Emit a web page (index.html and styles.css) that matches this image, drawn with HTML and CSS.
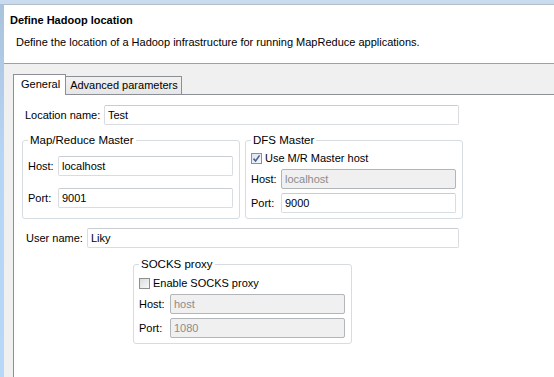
FILE: index.html
```html
<!DOCTYPE html>
<html lang="en">
<head>
  <meta charset="UTF-8" />
  <title>Define Hadoop location</title>
  <link rel="stylesheet" href="styles.css">
</head>
<body>
  <div class="window">
    <div class="frame-edge"></div>
    <div class="dialog">
      <header class="banner">
        <h1>Define Hadoop location</h1>
        <p>Define the location of a Hadoop infrastructure for running MapReduce applications.</p>
      </header>

      <div class="body">
        <div class="tabs">
          <div class="tab active">General</div>
          <div class="tab">Advanced parameters</div>
        </div>

        <div class="tab-page">
          <div class="form">
            <div class="row location-row">
              <label>Location name:</label>
              <input class="field field-location" type="text" value="Test">
            </div>

            <div class="groups">
              <!-- Map/Reduce -->
              <fieldset class="group group-mr">
                <legend>Map/Reduce Master</legend>
                <div class="row mr-host">
                  <label>Host:</label>
                  <input class="field field-group" type="text" value="localhost">
                </div>
                <div class="row mr-port">
                  <label>Port:</label>
                  <input class="field field-group" type="text" value="9001">
                </div>
              </fieldset>

              <!-- DFS -->
              <fieldset class="group group-dfs">
                <legend>DFS Master</legend>
                <div class="check-row">
                  <span class="check checked">
                    <svg width="9" height="9" viewBox="0 0 9 9"><path d="M1.5 4.6 L3.6 7 L7.6 1.4" fill="none" stroke="#4b6496" stroke-width="1.6"/></svg>
                  </span>
                  <span>Use M/R Master host</span>
                </div>
                <div class="row tight">
                  <label>Host:</label>
                  <input class="field field-group disabled" type="text" value="localhost" disabled>
                </div>
                <div class="row tight">
                  <label>Port:</label>
                  <input class="field field-group" type="text" value="9000">
                </div>
              </fieldset>
            </div>

            <div class="row user-row">
              <label>User name:</label>
              <input class="field field-user" type="text" value="Liky">
            </div>

            <!-- SOCKS -->
            <fieldset class="group group-socks">
              <legend>SOCKS proxy</legend>
              <div class="check-row">
                <span class="check"></span>
                <span>Enable SOCKS proxy</span>
              </div>
              <div class="row tight">
                <label>Host:</label>
                <input class="field field-group disabled" type="text" value="host" disabled>
              </div>
              <div class="row tight">
                <label>Port:</label>
                <input class="field field-group disabled" type="text" value="1080" disabled>
              </div>
            </fieldset>
          </div>
        </div>
      </div>
    </div>
  </div>
</body>
</html>
```

FILE: styles.css
```css
html,
body {
  height: 100%;
}

body {
  margin: 0;
  font-family: "Liberation Sans", Arial, sans-serif;
  font-size: 11px;
  color: #000;
  background-color: #fff;
}

.window {
  display: flex;
  height: 100vh;
  box-sizing: border-box;
  border-top: 4px solid #c8dbef;
}

.frame-edge {
  width: 4px;
  background: linear-gradient(#aac3dc, #b6d4f5 40%, #b9d7f8);
}

.dialog {
  flex: 1;
  display: flex;
  flex-direction: column;
  background-color: #f0f0f0;
  border-top: 1px solid #b4bcc6;
}

.banner {
  height: 58px;
  background-color: #fff;
  border-bottom: 1px solid #a0a0a0;
  padding: 0 6px;
}

.banner h1 {
  margin: 7px 0 0;
  font-size: 11px;
  line-height: 16px;
  font-weight: bold;
}

.banner p {
  margin: 6px 0 0 6px;
  line-height: 16px;
}

.body {
  flex: 1;
  display: flex;
  flex-direction: column;
  padding: 10px 0 0 9px;
}

.tabs {
  display: flex;
  align-items: flex-end;
}

.tab {
  height: 17px;
  line-height: 17px;
  padding: 0 3px 0 4px;
  border: 1px solid #8c8f96;
  border-bottom: none;
  border-left: none;
  background: linear-gradient(#f2f2f2, #e6e6e6);
}

.tab.active {
  height: 20px;
  line-height: 19px;
  padding: 0 5px 0 7px;
  border-left: 1px solid #8c8f96;
  background: #fff;
  margin-bottom: -1px;
  position: relative;
}

.tab-page {
  flex: 1;
  background-color: #fff;
  border-top: 1px solid #8c8f96;
  border-left: 1px solid #8c8f96;
}

.form {
  width: 441px;
  margin-left: 8px;
}

.row {
  display: flex;
  align-items: center;
}

.row label {
  flex: 1;
  white-space: nowrap;
}

.location-row {
  margin-top: 10px;
  padding: 0 4px 0 3px;
}

.user-row {
  margin-top: 9px;
  padding: 0 4px 0 4px;
}

.field {
  box-sizing: border-box;
  height: 20px;
  margin: 0;
  padding: 0 3px;
  font: inherit;
  color: #000;
  border: 1px solid #d9dde2;
  border-top-color: #c9cdd2;
  border-radius: 2px;
  background-color: #fff;
  outline: none;
}

.field.disabled {
  color: #8c8c8c;
  background-color: #f0f0f0;
  border-color: #b3b6b9;
}

.field-location {
  width: 355px;
}

.field-user {
  width: 372px;
}

.field-group {
  width: 175px;
}

.groups {
  display: flex;
  gap: 5px;
  margin-top: 7px;
}

.group {
  margin: 0;
  min-width: 0;
  padding: 0 6px 5px 5px;
  border: 1px solid #d5dde3;
  border-radius: 3px;
}

.group legend {
  padding: 0 2px;
  line-height: 16px;
  font-size: 11.5px;
}

.group-mr,
.group-dfs {
  width: 218px;
  box-sizing: border-box;
}

.group-mr {
  padding-bottom: 8px;
}

.mr-host {
  margin-top: 8px;
}

.mr-port {
  margin-top: 12px;
}

.check-row {
  display: flex;
  align-items: center;
  height: 14px;
  margin-top: 4px;
}

.check {
  box-sizing: border-box;
  width: 11px;
  height: 11px;
  margin-right: 3px;
  border: 1px solid #8e8f8f;
  background: linear-gradient(135deg, #d9dcdf, #f7f8f9);
  display: flex;
  align-items: center;
  justify-content: center;
}

.check.checked {
  background: linear-gradient(135deg, #dfe6ee, #f5f7fa);
}

.row.tight {
  margin-top: 4px;
}

.group-dfs .check-row {
  margin-top: 3px;
}

.group-socks {
  box-sizing: border-box;
  width: 219px;
  margin: 8px auto 0;
}
```
